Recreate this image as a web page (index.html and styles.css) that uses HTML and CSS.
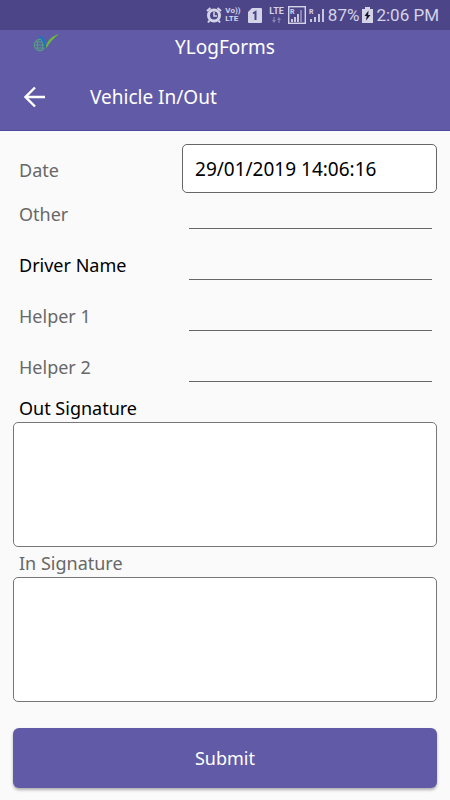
FILE: index.html
```html
<!DOCTYPE html>
<html lang="en">
<head>
<meta charset="utf-8">
<meta name="viewport" content="width=device-width, initial-scale=1">
<title>YLogForms</title>
<link rel="stylesheet" href="styles.css">
</head>
<body>
<div class="status">
  <svg class="icon" width="16" height="18" viewBox="0 0 16 18" aria-hidden="true">
    <circle cx="8" cy="9.500" r="5.500" fill="none" stroke="currentColor" stroke-width="3"/>
    <path d="M8 6v4h3" fill="none" stroke="currentColor" stroke-width="1.500"/>
    <path d="M1 5l3.500-3M15 5l-3.500-3M3.500 14.500l-1.500 2M12.500 14.500l1.500 2" stroke="currentColor" stroke-width="2"/>
  </svg>
  <span class="volte"><span>Vo))</span><span>LTE</span></span>
  <svg class="icon sim" width="14" height="15" viewBox="0 0 14 15" aria-hidden="true">
    <path d="M4 0h9a1 1 0 0 1 1 1v13a1 1 0 0 1-1 1H1a1 1 0 0 1-1-1V4z" fill="currentColor"/>
    <path d="M5 5.500l2.500-1.500v8" fill="none" stroke="#4c4689" stroke-width="2"/>
  </svg>
  <span class="lte"><span>LTE</span>
    <svg width="9" height="6" viewBox="0 0 9 6" aria-hidden="true"><path d="M2 0v3M7 3v3" stroke="#8984b5" stroke-width="1.200"/><path d="M0 3h4L2 6zM5 3h4L7 0z" fill="#8984b5"/></svg>
  </span>
  <svg class="icon" width="18" height="18" viewBox="0 0 18 18" aria-hidden="true">
    <rect x=".7" y=".7" width="16.600" height="16.600" fill="none" stroke="currentColor" stroke-width="1.400"/>
    <text x="2" y="8" class="roam">R</text>
    <path d="M4 13v3M7 11v5M10 8v8" stroke="currentColor" stroke-width="1.800"/>
    <path d="M13 4v12" stroke="#8984b5" stroke-width="2"/>
  </svg>
  <svg class="icon" width="16" height="18" viewBox="0 0 16 18" aria-hidden="true">
    <text x="0" y="8" class="roam">R</text>
    <path d="M2 13v3M6 11v5M10 8v8" stroke="currentColor" stroke-width="1.800"/>
    <path d="M14 3v13" stroke="currentColor" stroke-width="1.800"/>
  </svg>
  <span class="percent">87%</span>
  <svg class="icon" width="11" height="16" viewBox="0 0 11 16" aria-hidden="true">
    <path d="M3 0h5v2h3v14H0V2h3z" fill="currentColor"/>
    <path d="M6.500 3.500L2.500 9h2.200L4 13.500 8.500 8H6.200z" fill="#171530"/>
  </svg>
  <span class="clock">2:06 PM</span>
</div>
<header>
  <div class="brand">
    <svg class="logo" width="26" height="19" viewBox="0 0 26 19" aria-hidden="true">
      <g fill="none" stroke="#55a082" stroke-width="1">
        <circle cx="7" cy="11" r="5.800"/>
        <ellipse cx="7" cy="11" rx="2.700" ry="5.800"/>
        <path d="M1 11h12M2 8h9M2 14h9"/>
      </g>
      <path d="M5 2c5-.5 7 3 8 8 .2 3 .3 5-.7 8-.4-5-1.300-11-7.300-16z" fill="#1878bd"/>
      <path d="M13 12C15 6 19 2 26 0c-5 4-9 8-12.500 14z" fill="#6dba35"/>
    </svg>
    <span class="app">YLogForms</span>
  </div>
  <div class="toolbar">
    <button class="back" type="button" aria-label="Back">
      <svg width="22" height="22" viewBox="0 0 22 22" aria-hidden="true"><path d="M21 11H2.500M11 1.500L1.500 11l9.500 9.500" fill="none" stroke="currentColor" stroke-width="2.400"/></svg>
    </button>
    <h1>Vehicle In/Out</h1>
  </div>
</header>
<form>
  <div class="row date"><label for="date">Date</label><input id="date" type="text" value="29/01/2019 14:06:16"></div>
  <div class="row"><label for="other">Other</label><input id="other" type="text"></div>
  <div class="row required"><label for="driver">Driver Name</label><input id="driver" type="text" required></div>
  <div class="row"><label for="helper1">Helper 1</label><input id="helper1" type="text"></div>
  <div class="row"><label for="helper2">Helper 2</label><input id="helper2" type="text"></div>
  <div class="sign required"><span id="out-label">Out Signature</span><canvas tabindex="0" aria-labelledby="out-label"></canvas></div>
  <div class="sign"><span id="in-label">In Signature</span><canvas tabindex="0" aria-labelledby="in-label"></canvas></div>
  <button class="submit" type="submit">Submit</button>
</form>
</body>
</html>
```
FILE: styles.css
```css
* {
  box-sizing: border-box;
}

body {
  margin: 0;
  background: #fafafa;
  color: #686868;
  font-family: "Noto Sans", sans-serif;
  font-size: 18px;
  line-height: 24px;
}

button,
input {
  font: inherit;
}

.status {
  display: flex;
  align-items: center;
  justify-content: flex-end;
  gap: 3px;
  height: 30px;
  padding-right: 11px;
  background: #4c4689;
  color: #d5d3e8;
  font-family: Roboto, sans-serif;
  white-space: nowrap;
}

.icon {
  flex: none;
}

.volte {
  display: flex;
  flex-direction: column;
  width: 15px;
  font-size: 8px;
  font-weight: 700;
  line-height: 8px;
}

.sim {
  margin: 0 4px 0 5px;
}

.lte {
  display: flex;
  flex-direction: column;
  align-items: center;
  gap: 1px;
  margin-right: 1px;
  font-size: 9px;
  font-weight: 700;
  line-height: 9px;
}

.roam {
  fill: currentColor;
  font-size: 7px;
  font-weight: 700;
}

.percent,
.clock {
  font-size: 17px;
}

header {
  background: #615ba7;
  border-bottom: 1px solid #4f489c;
  color: #fff;
  font-size: 19px;
}

.brand {
  display: grid;
  grid-template-columns: 1fr auto 1fr;
  align-items: center;
  height: 34px;
}

.logo {
  margin: 0 0 8px 33px;
}

.toolbar {
  display: flex;
  align-items: center;
  gap: 44px;
  height: 66px;
  padding-left: 24px;
}

.back {
  display: flex;
  padding: 0;
  border: 0;
  background: none;
  color: inherit;
}

h1 {
  margin: 0;
  font-size: 19px;
  font-weight: 400;
}

form {
  padding: 13px 13px 12px;
}

.row {
  display: grid;
  grid-template-columns: 2fr 3fr;
  align-items: center;
  margin-bottom: 15px;
  padding: 0 5px 0 6px;
}

.row label {
  padding-top: 6px;
}

.row input {
  justify-self: end;
  width: 100%;
  height: 36px;
  padding: 0 8px;
  border: 0;
  border-bottom: 1px solid #666;
  border-radius: 0;
  background: transparent;
  color: #000;
}

.row:not(.date) {
  column-gap: 8px;
}

.date {
  grid-template-columns: 39fr 61fr;
  margin-bottom: 0;
  padding-right: 0;
}

.date label {
  padding-top: 2px;
}

.row.date input {
  height: 49px;
  padding: 0 12px;
  border: 1px solid #666;
  border-radius: 5px;
  background: #fff;
  font-size: 19px;
}

.required {
  color: #000;
}

.sign {
  margin-bottom: 5px;
}

.sign span {
  display: block;
  padding-left: 6px;
  line-height: 23px;
}

canvas {
  display: block;
  width: 100%;
  height: 125px;
  margin-top: 2px;
  border: 1px solid #777;
  border-radius: 5px;
  background: #fff;
}

.submit {
  width: 100%;
  height: 60px;
  margin-top: 21px;
  border: 0;
  border-radius: 6px;
  background: #615ba7;
  box-shadow: 0 2px 3px #0000004d;
  color: #fff;
}
```
